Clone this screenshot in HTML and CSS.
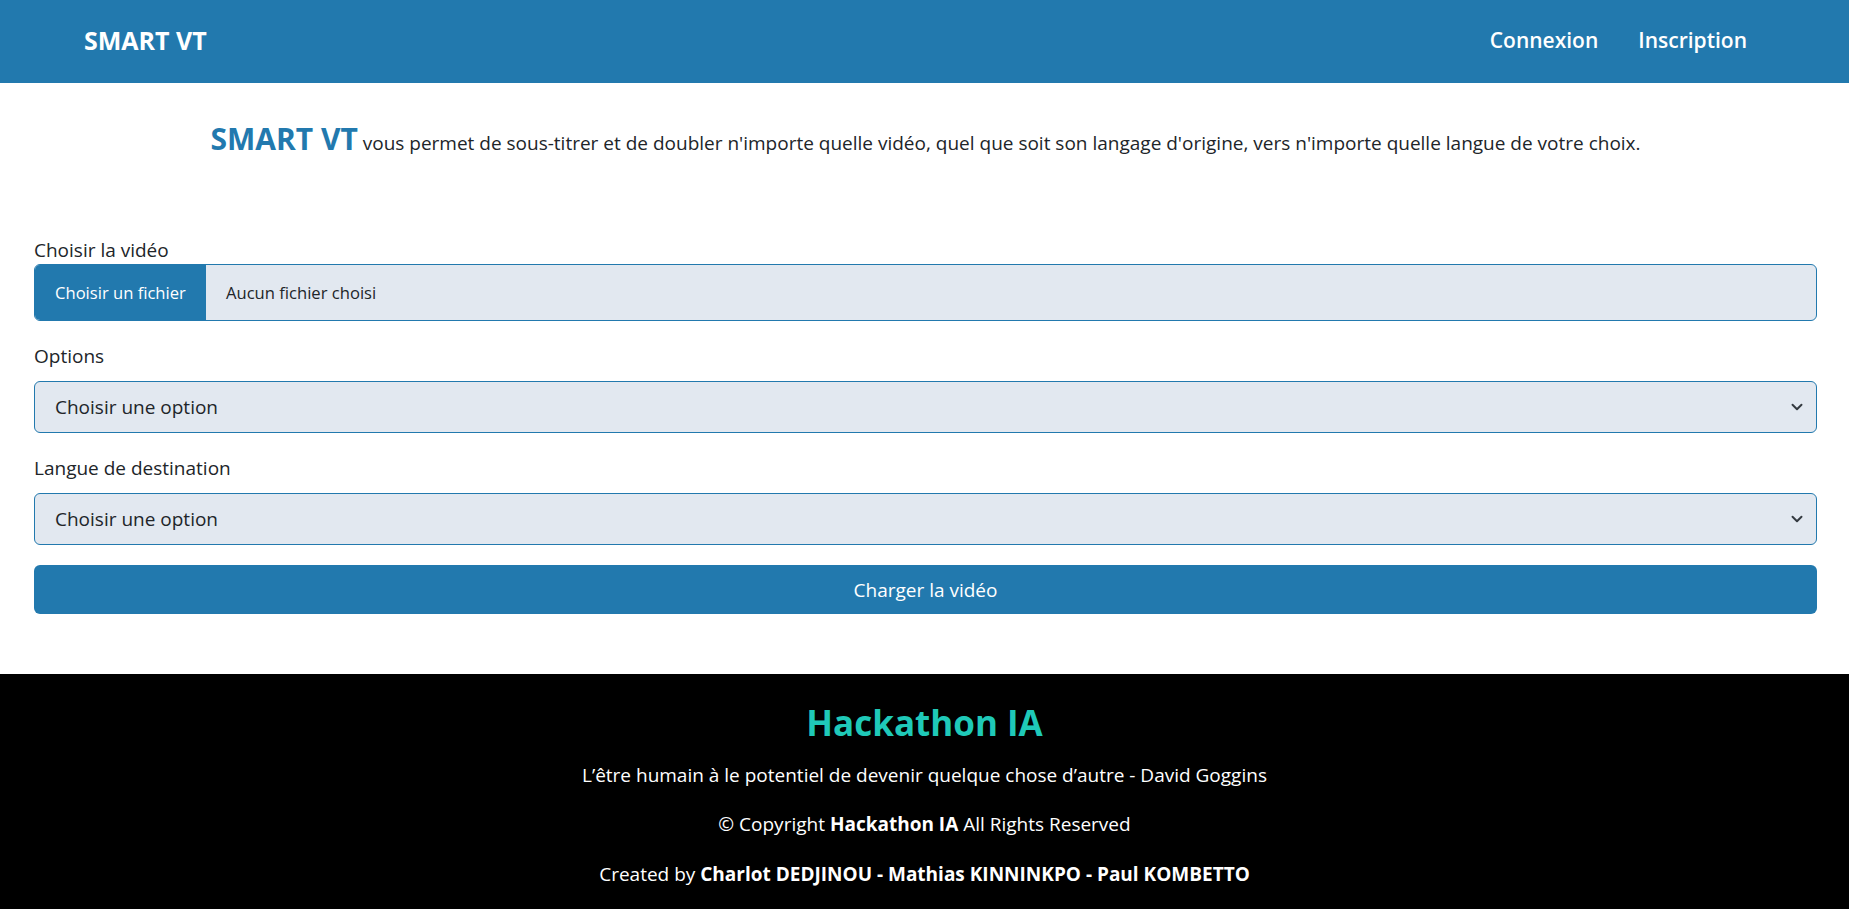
FILE: index.html
```html
<!DOCTYPE html>
<html lang="fr">
<head>
    <meta charset="UTF-8">
    <title>SMART VT</title>
    <link rel="stylesheet" href="styles.css">
</head>
<body>
<!--barre de navigation-->
<header class="topbar">
    <a class="brand" href="#">SMART VT</a>
    <nav class="nav-links">
        <a href="#">Connexion</a>
        <a href="#">Inscription</a>
    </nav>
</header>

<main class="contain">
    <p class="intro"><strong>SMART VT</strong> vous permet de sous-titrer et de doubler n'importe quelle vidéo, quel que soit son langage d'origine, vers n'importe quelle langue de votre choix.</p>

    <form class="upload-form" onsubmit="return false">
        <div class="field">
            <label class="field-label tight">Choisir la vidéo</label>
            <label class="file-input">
                <span class="file-btn">Choisir un fichier</span>
                <span class="file-name">Aucun fichier choisi</span>
            </label>
        </div>
        <div class="field">
            <label class="field-label" for="options">Options</label>
            <div class="select-wrap">
                <select id="options" class="select">
                    <option>Choisir une option</option>
                    <option>Sous-titrer</option>
                    <option>Doubler</option>
                </select>
                <svg class="chevron" viewBox="0 0 16 16" width="12" height="12"><path d="M2 5l6 6 6-6" fill="none" stroke="#343a40" stroke-width="2.6" stroke-linecap="round" stroke-linejoin="round"/></svg>
            </div>
        </div>
        <div class="field">
            <label class="field-label" for="langue">Langue de destination</label>
            <div class="select-wrap">
                <select id="langue" class="select">
                    <option>Choisir une option</option>
                    <option>Français</option>
                    <option>Anglais</option>
                </select>
                <svg class="chevron" viewBox="0 0 16 16" width="12" height="12"><path d="M2 5l6 6 6-6" fill="none" stroke="#343a40" stroke-width="2.6" stroke-linecap="round" stroke-linejoin="round"/></svg>
            </div>
        </div>
        <button class="submit-btn" type="submit">Charger la vidéo</button>
    </form>
</main>

<footer class="footer">
    <h2 class="footer-title">Hackathon IA</h2>
    <p>L’être humain à le potentiel de devenir quelque chose d’autre - David Goggins</p>
    <p>© Copyright <strong>Hackathon IA</strong> All Rights Reserved</p>
    <p>Created by <strong>Charlot DEDJINOU - Mathias KINNINKPO - Paul KOMBETTO</strong></p>
</footer>
</body>
</html>
```

FILE: styles.css
```css
body {
    padding: 0;
    margin: 0;
    font-family: "Open Sans", "Noto Sans", sans-serif;
    font-size: 19px;
    color: #212529;
    background-color: white;
}

.topbar {
    height: 83px;
    box-sizing: border-box;
    display: flex;
    align-items: center;
    justify-content: space-between;
    padding: 0 102px 4px 84px;
    background-color: #2279ae;
}

.topbar a {
    color: white;
    text-decoration: none;
    font-weight: 600;
}

.brand {
    font-size: 25px;
    font-weight: 700 !important;
}

.nav-links {
    display: flex;
    gap: 40px;
}

.nav-links a {
    font-size: 21px;
}

.contain {
    padding: 0 32px 0 34px;
}

.intro {
    margin: 0;
    padding: 36px 0 73px;
    text-align: center;
    line-height: 40px;
}

.intro strong {
    color: #2279ae;
    font-size: 30px;
    font-weight: 700;
}

.upload-form {
    display: flex;
    flex-direction: column;
    gap: 21px;
}

.field {
    display: flex;
    flex-direction: column;
}

.field-label {
    line-height: 28px;
    margin-bottom: 11px;
}

.field-label.tight {
    margin-bottom: 0;
}

.file-input {
    display: flex;
    height: 57px;
    box-sizing: border-box;
    border: 1px solid #2279ae;
    border-radius: 6px;
    overflow: hidden;
    background-color: #e2e8f0;
    font-size: 16.6px;
    cursor: pointer;
}

.file-btn {
    display: flex;
    align-items: center;
    width: 171px;
    padding-left: 20px;
    box-sizing: border-box;
    background-color: #2279ae;
    color: white;
}

.file-name {
    display: flex;
    align-items: center;
    padding-left: 20px;
}

.select-wrap {
    position: relative;
}

.select {
    width: 100%;
    height: 52px;
    padding: 0 50px 0 20px;
    border: 1px solid #2279ae;
    border-radius: 6px;
    background-color: #e2e8f0;
    color: #212529;
    font-family: inherit;
    font-size: 19px;
    appearance: none;
    -webkit-appearance: none;
}

.chevron {
    position: absolute;
    right: 14px;
    top: 20px;
    pointer-events: none;
}

.submit-btn {
    margin-top: -1px;
    height: 49px;
    border: none;
    border-radius: 6px;
    background-color: #2279ae;
    color: white;
    font-family: inherit;
    font-size: 19px;
    cursor: pointer;
}

.footer {
    margin-top: 60px;
    padding: 28px 0 22px;
    background-color: black;
    color: white;
    text-align: center;
    line-height: 28px;
}

.footer-title {
    margin: 0 0 17px;
    color: #1fc9b8;
    font-size: 35px;
    line-height: 42px;
    font-weight: 700;
}

.footer p {
    margin: 0 0 21px;
}

.footer p:last-child {
    margin-top: 22px;
    margin-bottom: 0;
}
```
